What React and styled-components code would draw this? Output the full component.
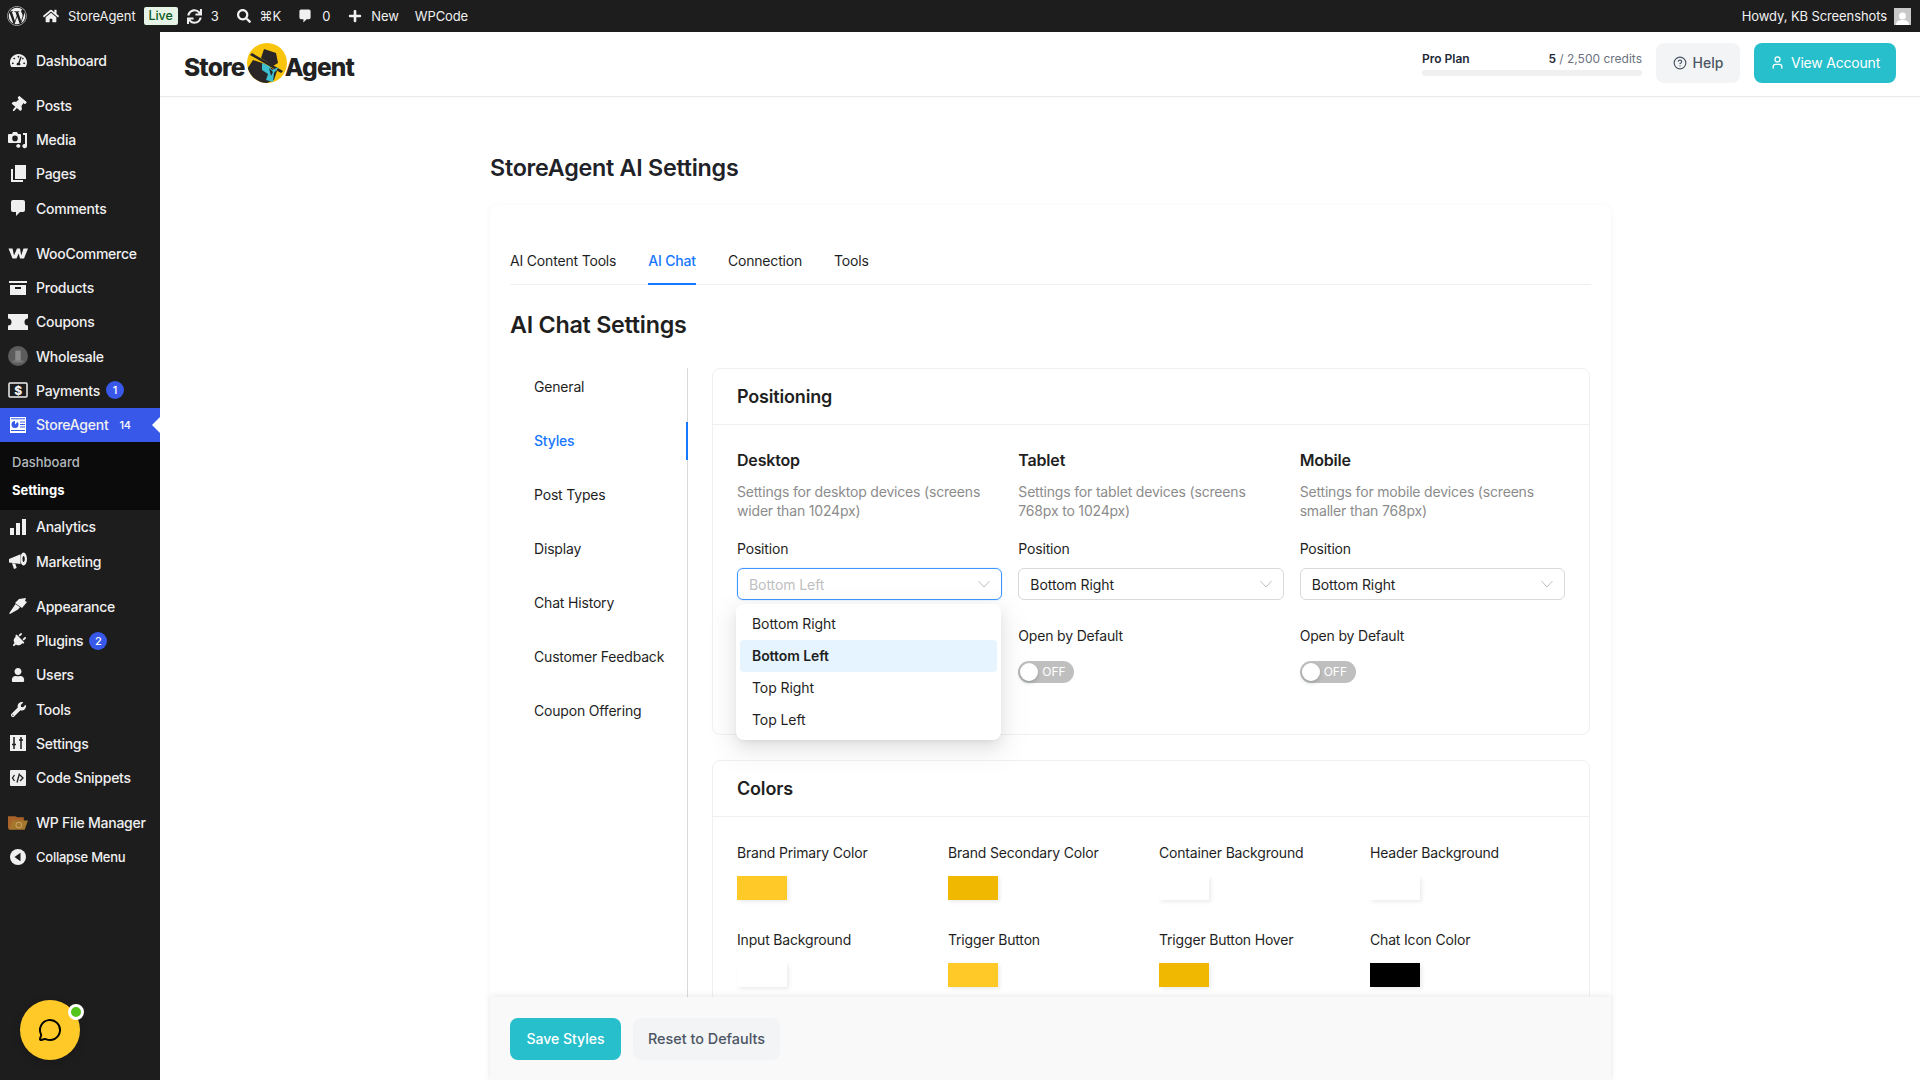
import React from "react";
import styled, { createGlobalStyle } from "styled-components";
import { FaWordpress, FaSync, FaSearch, FaPlus, FaHome, FaTachometerAlt, FaThumbtack, FaPlug, FaUser, FaWrench } from "react-icons/fa";
import { CircleHelp, MessageCircle, User } from "lucide-react";

const Global = createGlobalStyle`
  html, body { margin: 0; padding: 0; height: 100%; overflow: hidden; background: #fff; }
  body { font-family: Inter, "Noto Sans", sans-serif; color: #1f1f1f; -webkit-font-smoothing: antialiased; }
  * { box-sizing: border-box; }
`;

const Page = styled.div`
  position: relative; width: 1920px; height: 1080px; overflow: hidden;
  display: flex; flex-direction: column;
`;
const AdminBar = styled.header`
  height: 32px; flex: none; background: #1d1d1d; color: #f0f0f1;
  display: flex; align-items: center; padding: 0 9px 0 7px; font-size: 13px; letter-spacing: -0.1px;
`;
const AdminItem = styled.span`
  display: inline-flex; align-items: center; gap: ${p => p.$gap ?? 9}px; margin-left: ${p => p.$ml ?? 0}px;
  line-height: 32px; white-space: nowrap;
`;
const LiveBadge = styled.span`
  display: inline-block; height: 18px; line-height: 17px; padding: 0 5px; border-radius: 2px;
  background: #e6f3e6; color: #0f5a22; font-size: 12.5px; font-weight: 500;
`;
const Howdy = styled.span` margin-left: auto; display: inline-flex; align-items: center; gap: 7px; `;
const Avatar = styled.span`
  width: 17px; height: 17px; background: #c9c9c9; display: flex; align-items: flex-end; justify-content: center; overflow: hidden;
`;
const Body = styled.div` flex: 1; display: flex; min-height: 0; `;
const Sidebar = styled.nav`
  width: 160px; flex: none; background: #1d1d1d; padding-top: 11px; letter-spacing: -0.25px;
`;
const Row = styled.div`
  position: relative; height: 34.25px; display: flex; align-items: center; padding-left: 36px;
  margin-top: ${p => (p.$sep ? 11 : 0)}px;
  background: ${p => (p.$active ? "#3858e9" : "transparent")};
  color: #f0f0f1; font-size: ${p => (p.$small ? 13 : 14)}px; font-weight: 500; white-space: nowrap;
`;
const RowIcon = styled.span`
  position: absolute; left: 8px; top: 50%; transform: translateY(-50%); width: 20px; height: 20px;
  display: flex; align-items: center; justify-content: center; color: #f0f0f1;
`;
const Count = styled.span`
  width: 18px; height: 18px; border-radius: 50%; background: #3858e9; color: #fff; margin-left: 6px;
  font-size: 11px; display: flex; align-items: center; justify-content: center; font-weight: 500;
`;
const PlainCount = styled.span` margin-left: 11px; font-size: 11px; color: #fff; font-weight: 500; `;
const ActiveArrow = styled.span`
  position: absolute; right: 0; top: 50%; margin-top: -8px; width: 0; height: 0;
  border: 8px solid transparent; border-right-color: #fff; border-left-width: 0;
`;
const SubMenu = styled.div` background: #0b0b0b; padding: 6px 0; letter-spacing: 0; `;
const SubItem = styled.div`
  height: 28px; line-height: 28px; padding-left: 12px; font-size: 13px;
  color: ${p => (p.$on ? "#fff" : "#b4b9be")}; font-weight: ${p => (p.$on ? 700 : 500)};
`;
const ChatBubble = styled.div`
  position: absolute; left: 20px; top: 1000px; width: 60px; height: 60px; border-radius: 50%;
  background: #ffca28; display: flex; align-items: center; justify-content: center; color: #000;
  box-shadow: 0 2px 10px rgba(0,0,0,.15);
`;
const OnlineDot = styled.span`
  position: absolute; left: 48px; top: 4px; width: 16px; height: 16px; border-radius: 50%;
  background: #52c41a; border: 3px solid #fff;
`;
const Main = styled.main` position: relative; flex: 1; min-width: 0; display: flex; flex-direction: column; overflow: hidden; `;
const TopBar = styled.div`
  height: 65px; flex: none; display: flex; align-items: center; justify-content: space-between;
  padding: 0 24px 3px; border-bottom: 1px solid #ebebeb; box-shadow: 0 1px 2px rgba(0,0,0,.03);
`;
const Logo = styled.div`
  display: flex; align-items: center; font-size: 24.5px; font-weight: 800; color: #222; letter-spacing: -0.8px;
`;
const LogoWord = styled.span` margin-top: 9px; `;
const LogoSvg = styled.svg` width: 40px; height: 40px; margin: 0 -2px 0 2px; flex: none; `;
const TopActions = styled.div` display: flex; align-items: center; gap: 14px; `;
const Plan = styled.div` width: 220px; `;
const PlanText = styled.div`
  display: flex; justify-content: space-between; font-size: 12px; line-height: 16px; color: #6b7280; margin: 2px 0 3px;
`;
const PlanName = styled.b` font-weight: 600; color: #1f2937; `;
const PlanUsed = styled.b` font-weight: 600; color: #1f2937; `;
const PlanTrack = styled.div` height: 6px; border-radius: 3px; background: #f0f0f0; `;
const TopButton = styled.button`
  height: 40px; width: ${p => p.$w}px; border: 0; border-radius: 8px; font: inherit; font-size: 14px;
  font-weight: ${p => (p.$primary ? 400 : 500)}; letter-spacing: ${p => (p.$primary ? "-0.2px" : "0")};
  display: inline-flex; align-items: center; justify-content: center; gap: 6px;
  background: ${p => (p.$primary ? "#26bfcb" : "#f3f4f6")}; color: ${p => (p.$primary ? "#fff" : "#4b5563")};
`;
const Content = styled.div` padding: 55px 0 0 330px; width: 1451px; letter-spacing: -0.18px; `;
const PageTitle = styled.h1` margin: 0 0 21px; font-size: 23.3px; line-height: 32px; font-weight: 600; color: #1f2329; letter-spacing: -0.25px; `;
const Card = styled.section`
  background: #fff; border-radius: 8px; padding: 33px 20px 40px; box-shadow: 0 1px 6px rgba(0,0,0,.05);
`;
const Tabs = styled.div` display: flex; gap: 32px; border-bottom: 1px solid #f0f0f0; `;
const Tab = styled.div`
  padding: 12px 0 11px; line-height: 22px; font-size: 14px; margin-bottom: -1px;
  color: ${p => (p.$on ? "#1677ff" : "#1f1f1f")}; font-weight: ${p => (p.$on ? 500 : 400)};
  border-bottom: 2px solid ${p => (p.$on ? "#1677ff" : "transparent")};
`;
const SectionTitle = styled.h2` margin: 24px 0 27px; font-size: 23.3px; line-height: 32px; font-weight: 600; color: #1f1f1f; letter-spacing: -0.25px; `;
const Split = styled.div` display: flex; gap: 24px; `;
const SideNav = styled.div`
  width: 178px; flex: none; border-right: 1px solid #d9d9d9; display: flex; flex-direction: column; gap: 16px;
`;
const SideItem = styled.div`
  height: 38px; line-height: 38px; padding-left: 24px; font-size: 14px; margin-right: -1px;
  color: ${p => (p.$on ? "#1677ff" : "#1f1f1f")}; font-weight: ${p => (p.$on ? 500 : 400)};
  border-right: 2px solid ${p => (p.$on ? "#1677ff" : "transparent")};
`;
const Panels = styled.div` width: 878px; `;
const Panel = styled.section`
  border: 1px solid #f0f0f0; border-radius: 8px; margin-bottom: 25px; background: #fff;
`;
const PanelHead = styled.h3`
  margin: 0; height: 56px; line-height: 55px; padding: 0 24px; font-size: 18px; font-weight: 600;
  border-bottom: 1px solid #f0f0f0; color: #1f1f1f;
`;
const DeviceGrid = styled.div`
  display: grid; grid-template-columns: repeat(3, 1fr); gap: 16px; padding: 23px 24px 51px;
`;
const Device = styled.div` position: relative; min-width: 0; `;
const DeviceName = styled.h4` margin: 0; font-size: 16px; line-height: 24px; font-weight: 600; color: #1f1f1f; `;
const DeviceDesc = styled.p` margin: 10px 0 0; font-size: 14px; line-height: 19px; color: #8c8c8c; `;
const FieldLabel = styled.div` margin-top: ${p => p.$mt}px; font-size: 14px; line-height: 22px; color: #1f1f1f; `;
const Select = styled.div`
  position: relative; height: 32px; margin-top: 8px; border-radius: 6px; padding: 0 11px; font-size: 14px; letter-spacing: -0.08px;
  display: flex; align-items: center; justify-content: space-between; background: #fff;
  border: 1px solid ${p => (p.$open ? "#4096ff" : "#d9d9d9")};
  color: ${p => (p.$open ? "#bfbfbf" : "#1f1f1f")};
  box-shadow: ${p => (p.$open ? "0 0 0 1px rgba(5,145,255,.08)" : "none")};
`;
const Chevron = styled.svg` width: 12px; height: 8px; color: #bfbfbf; flex: none; `;
const Dropdown = styled.div`
  position: absolute; left: -1px; top: 156px; width: 265px; padding: 4px; background: #fff; border-radius: 8px; z-index: 5;
  box-shadow: 0 6px 16px rgba(0,0,0,.08), 0 3px 6px -4px rgba(0,0,0,.12), 0 9px 28px 8px rgba(0,0,0,.05);
`;
const Option = styled.div`
  height: 32px; line-height: 32px; padding: 0 12px; border-radius: 4px; font-size: 14px; color: #1f1f1f; letter-spacing: -0.08px;
  background: ${p => (p.$on ? "#e6f4ff" : "transparent")}; font-weight: ${p => (p.$on ? 600 : 400)};
`;
const Toggle = styled.div`
  position: relative; width: 56px; height: 22px; margin-top: 14px; border-radius: 11px; background: #bfbfbf;
  color: #fff; font-size: 12px; line-height: 22px; padding-left: 24px; letter-spacing: 0;
`;
const Knob = styled.span`
  position: absolute; left: 2px; top: 2px; width: 18px; height: 18px; border-radius: 50%; background: #fff;
  box-shadow: 0 2px 4px rgba(0,35,11,.2);
`;
const ColorGrid = styled.div`
  display: grid; grid-template-columns: repeat(4, 1fr); column-gap: 16px; row-gap: 29px; padding: 25px 24px 60px;
`;
const ColorField = styled.div` min-width: 0; `;
const ColorLabel = styled.div` font-size: 14px; line-height: 22px; color: #1f1f1f; white-space: nowrap; `;
const Swatch = styled.div`
  width: 50px; height: 24px; margin-top: 12px; background: ${p => p.$c}; box-shadow: 2px 2px 4px rgba(0,0,0,.08);
`;
const Footer = styled.div`
  position: absolute; left: 330px; bottom: 0; width: 1121px; height: 83px; background: #f9f9f9;
  display: flex; align-items: center; gap: 12px; padding: 0 20px; z-index: 3;
  box-shadow: 0 -2px 6px rgba(0,0,0,.07);
`;
const SaveButton = styled.button`
  height: 42px; border: 0; border-radius: 8px; font: inherit; font-weight: 500; width: ${p => p.$w}px;
  font-size: ${p => (p.$primary ? 14 : 14.4)}px;
  background: ${p => (p.$primary ? "#26bfcb" : "#f3f4f6")}; color: ${p => (p.$primary ? "#fff" : "#4b5563")};
`;
const LogoMark = () => (
  <LogoSvg viewBox="0 0 40 40">
    <circle cx="20" cy="20" r="20" fill="#f9c50c" />
    <path d="M0.800 25 L6 17 L15 20 L30 28 L27 37 L20 40 A20 20 0 0 1 0.800 25Z" fill="#2a2526" />
    <path d="M17 6 L29 10 L31 20 L26 23 L14 15Z" fill="#2a2526" />
    <path d="M5 10 L36 28 L34 30 L3 12Z" fill="#2a2526" />
    <path d="M15 20 L22 23 L25 27 L32 24 L27 30 L26 39 L19 37 L21 31 L15 27Z" fill="#3cbfd0" />
    <path d="M22 25 L26 29 L24 33Z" fill="#2a2526" />
  </LogoSvg>
);
const Ic = ({ children, w = 20, h = 20 }) => <svg width={w} height={h} viewBox="0 0 20 20" fill="currentColor">{children}</svg>;
const MediaIcon = () => <Ic><path d="M1 4h3l1-2h4l1 2h2a1 1 0 011 1v7a1 1 0 01-1 1H1a1 1 0 01-1-1V5a1 1 0 011-1zm6 1.600A2.800 2.800 0 107 11.200 2.800 2.800 0 007 5.600z" /><path d="M15 3h4v13a2.300 2 0 01-4 1.500 2.200 2 0 012-3.400V5h-2zM11 14.300a2 2 0 00-2.800 2 2.200 2 0 004 .500V15z" /></Ic>;
const PagesIcon = () => <Ic><path d="M7 1h11v14H7z" /><path d="M3 5h2v11h10v2H3z" /></Ic>;
const BubbleIcon = ({ w = 20 }) => <Ic w={w} h={w}><path d="M5 2h10a2 2 0 012 2v8a2 2 0 01-2 2h-3l-4 4v-4H5a2 2 0 01-2-2V4a2 2 0 012-2z" /></Ic>;
const WooIcon = () => <Ic><path d="M0.500 5.500h4l1.500 7 3-7h3l1.200 7 2.300-7h4.500l-4 10h-4l-1.300-5-2.200 5h-4z" /></Ic>;
const BoxIcon = () => <Ic><path d="M1 3h18v2H1zM2 7h16v10H2zM7 9v2h6V9z" fillRule="evenodd" /></Ic>;
const TicketIcon = () => <Ic><path d="M0 2h20v4.500a3.500 3.500 0 000 7V18H0v-4.500a3.500 3.500 0 000-7z" /></Ic>;
const WholesaleIcon = () => <svg width="22" height="22" viewBox="0 0 22 22"><circle cx="11" cy="11" r="11" fill="#5c5c5c" /><path d="M8 5h6v13H8z" fill="#8a8a8a" /><path d="M5 16h12v2H5z" fill="#777" /></svg>;
const PayIcon = () => <svg width="20" height="16" viewBox="0 0 20 16"><rect x="1" y="1" width="18" height="14" rx="1" fill="none" stroke="currentColor" strokeWidth="1.500" /><text x="10" y="12.500" fontSize="12" fontWeight="800" fontFamily="Inter" textAnchor="middle" fill="currentColor">$</text></svg>;
const NewsIcon = () => <svg width="16" height="16" viewBox="0 0 16 16"><rect width="16" height="16" fill="#fff" /><circle cx="5" cy="7.500" r="3.500" fill="#3858e9" /><path d="M5 7.500V4h3.500z" fill="#fff" /><path d="M1 1.800h14M10 5h5M10 7.500h5M10 10h5M1 13.500h14" stroke="#3858e9" strokeWidth="1" /></svg>;
const BarsIcon = () => <Ic><path d="M2 11h4v7H2zM8 6h4v12H8zM14 2h4v16h-4z" /></Ic>;
const MegaphoneIcon = () => <Ic><path d="M1 8 12.500 3.200V13L1 11.500z" /><path d="M15.500 1.500c2 0 3.500 3 3.500 6.500s-1.500 6.500-3.500 6.500S12.500 11.500 12.500 8s1-6.500 3-6.500zm0 3.500c-.8 0-1 1.500-1 3s.2 3 1 3 1.300-1.500 1.300-3-.5-3-1.300-3z" fillRule="evenodd" /><path d="M4 12.200l3.200.4 1.500 4.400-2.700 1z" /></Ic>;
const BrushIcon = () => <Ic><path d="M11 3l7-1-1 3 2 1-5 6-7-5zM7.500 8l4.500 3.300-2 2.200-8 4.500-.800-.800z" /></Ic>;
const SlidersIcon = () => <svg width="16" height="16" viewBox="0 0 16 16"><rect width="16" height="16" fill="#f0f0f1" /><path d="M4 2v12M11 2v12M2 9.500h4M9 5h4" stroke="#1d1d1d" strokeWidth="1.500" /></svg>;
const CodeIcon = () => <svg width="16" height="16" viewBox="0 0 16 16"><rect width="16" height="16" rx="1" fill="#eee" /><path d="M4.500 5 2.500 8l2 3M9.500 3.500 7 12.500M10 5l3 3-3 3" fill="none" stroke="#1d1d1d" strokeWidth="1.300" /></svg>;
const FolderIcon = () => <svg width="24" height="20" viewBox="0 0 24 20"><path d="M0 2h9l2 1h8v14H0z" fill="#a9622a" /><path d="M5 7h19l-4 11H1z" fill="#a5772c" /><circle cx="13" cy="12.500" r="3.500" fill="none" stroke="#c9a76d" strokeWidth="1.200" /></svg>;
const CollapseIcon = () => <svg width="16" height="16" viewBox="0 0 16 16"><circle cx="8" cy="8" r="8" fill="#f0f0f1" /><path d="M10.500 3.800v8.400L4.500 8z" fill="#1d1d1d" /></svg>;

const menu = [
  { t: "Dashboard", i: <FaTachometerAlt size={17} /> },
  { t: "Posts", i: <FaThumbtack size={16} style={{ transform: "rotate(40deg)" }} />, sep: 1 },
  { t: "Media", i: <MediaIcon /> },
  { t: "Pages", i: <PagesIcon /> },
  { t: "Comments", i: <BubbleIcon /> },
  { t: "WooCommerce", i: <WooIcon />, sep: 1 },
  { t: "Products", i: <BoxIcon /> },
  { t: "Coupons", i: <TicketIcon /> },
  { t: "Wholesale", i: <WholesaleIcon /> },
  { t: "Payments", i: <PayIcon />, n: 1 },
  { t: "StoreAgent", i: <NewsIcon />, active: 1, plain: 14 },
  { t: "Analytics", i: <BarsIcon /> },
  { t: "Marketing", i: <MegaphoneIcon /> },
  { t: "Appearance", i: <BrushIcon />, sep: 1 },
  { t: "Plugins", i: <FaPlug size={15} style={{ transform: "rotate(45deg)" }} />, n: 2 },
  { t: "Users", i: <FaUser size={14} /> },
  { t: "Tools", i: <FaWrench size={15} /> },
  { t: "Settings", i: <SlidersIcon /> },
  { t: "Code Snippets", i: <CodeIcon /> },
  { t: "WP File Manager", i: <FolderIcon />, sep: 1 },
  { t: "Collapse Menu", i: <CollapseIcon />, small: 1 },
];
const devices = [
  { n: "Desktop", d: "Settings for desktop devices (screens wider than 1024px)", v: "Bottom Left", open: 1 },
  { n: "Tablet", d: "Settings for tablet devices (screens 768px to 1024px)", v: "Bottom Right" },
  { n: "Mobile", d: "Settings for mobile devices (screens smaller than 768px)", v: "Bottom Right" },
];
const colors = [
  ["Brand Primary Color", "#ffca28"], ["Brand Secondary Color", "#f0b800"], ["Container Background", "#fff"], ["Header Background", "#fff"],
  ["Input Background", "#fff"], ["Trigger Button", "#ffca28"], ["Trigger Button Hover", "#f0b800"], ["Chat Icon Color", "#000"],
];
const side = ["General", "Styles", "Post Types", "Display", "Chat History", "Customer Feedback", "Coupon Offering"];

export default function App() {
  return (
    <Page>
      <Global />
      <AdminBar>
        <AdminItem><FaWordpress size={20} /></AdminItem>
        <AdminItem $ml={16}><FaHome size={16} />StoreAgent</AdminItem>
        <AdminItem $ml={8}><LiveBadge>Live</LiveBadge></AdminItem>
        <AdminItem $ml={9}><FaSync size={15} />3</AdminItem>
        <AdminItem $ml={18}><FaSearch size={14} />⌘K</AdminItem>
        <AdminItem $ml={16}><BubbleIcon w={16} />0</AdminItem>
        <AdminItem $ml={18}><FaPlus size={14} />New</AdminItem>
        <AdminItem $ml={16}>WPCode</AdminItem>
        <Howdy>Howdy, KB Screenshots
          <Avatar><svg width="13" height="14" viewBox="0 0 13 14"><circle cx="6.500" cy="5" r="3.500" fill="#fff" /><path d="M0 14c0-4 3-5 6.500-5s6.500 1 6.500 5z" fill="#fff" /></svg></Avatar>
        </Howdy>
      </AdminBar>
      <Body>
        <Sidebar>
          {menu.map(m => (
            <React.Fragment key={m.t}>
              <Row $sep={m.sep} $active={m.active} $small={m.small}>
                <RowIcon>{m.i}</RowIcon>
                {m.t}
                {m.n && <Count>{m.n}</Count>}
                {m.plain && <PlainCount>{m.plain}</PlainCount>}
                {m.active && <ActiveArrow />}
              </Row>
              {m.active && (
                <SubMenu>
                  <SubItem>Dashboard</SubItem>
                  <SubItem $on>Settings</SubItem>
                </SubMenu>
              )}
            </React.Fragment>
          ))}
        </Sidebar>
        <Main>
          <TopBar>
            <Logo><LogoWord>Store</LogoWord><LogoMark /><LogoWord>Agent</LogoWord></Logo>
            <TopActions>
              <Plan>
                <PlanText><PlanName>Pro Plan</PlanName><span><PlanUsed>5</PlanUsed> / 2,500 credits</span></PlanText>
                <PlanTrack />
              </Plan>
              <TopButton $w={84}><CircleHelp size={14} />Help</TopButton>
              <TopButton $w={142} $primary><User size={15} />View Account</TopButton>
            </TopActions>
          </TopBar>
          <Content>
            <PageTitle>StoreAgent AI Settings</PageTitle>
            <Card>
              <Tabs>
                <Tab>AI Content Tools</Tab>
                <Tab $on>AI Chat</Tab>
                <Tab>Connection</Tab>
                <Tab>Tools</Tab>
              </Tabs>
              <SectionTitle>AI Chat Settings</SectionTitle>
              <Split>
                <SideNav>
                  {side.map(s => <SideItem key={s} $on={s === "Styles"}>{s}</SideItem>)}
                </SideNav>
                <Panels>
                  <Panel>
                    <PanelHead>Positioning</PanelHead>
                    <DeviceGrid>
                      {devices.map(d => (
                        <Device key={d.n}>
                          <DeviceName>{d.n}</DeviceName>
                          <DeviceDesc>{d.d}</DeviceDesc>
                          <FieldLabel $mt={18}>Position</FieldLabel>
                          <Select $open={d.open}>{d.v}<Chevron viewBox="0 0 12 8"><path d="M.5 1 6 7l5.500-6" fill="none" stroke="currentColor" strokeWidth="1" /></Chevron></Select>
                          {d.open ? (
                            <Dropdown>
                              <Option>Bottom Right</Option>
                              <Option $on>Bottom Left</Option>
                              <Option>Top Right</Option>
                              <Option>Top Left</Option>
                            </Dropdown>
                          ) : (
                            <>
                              <FieldLabel $mt={25}>Open by Default</FieldLabel>
                              <Toggle><Knob />OFF</Toggle>
                            </>
                          )}
                        </Device>
                      ))}
                    </DeviceGrid>
                  </Panel>
                  <Panel>
                    <PanelHead>Colors</PanelHead>
                    <ColorGrid>
                      {colors.map(([l, c]) => (
                        <ColorField key={l}><ColorLabel>{l}</ColorLabel><Swatch $c={c} /></ColorField>
                      ))}
                    </ColorGrid>
                  </Panel>
                </Panels>
              </Split>
            </Card>
          </Content>
          <Footer>
            <SaveButton $primary $w={111}>Save Styles</SaveButton>
            <SaveButton $w={147}>Reset to Defaults</SaveButton>
          </Footer>
        </Main>
      </Body>
      <ChatBubble><MessageCircle size={24} strokeWidth={2} /><OnlineDot /></ChatBubble>
    </Page>
  );
}
